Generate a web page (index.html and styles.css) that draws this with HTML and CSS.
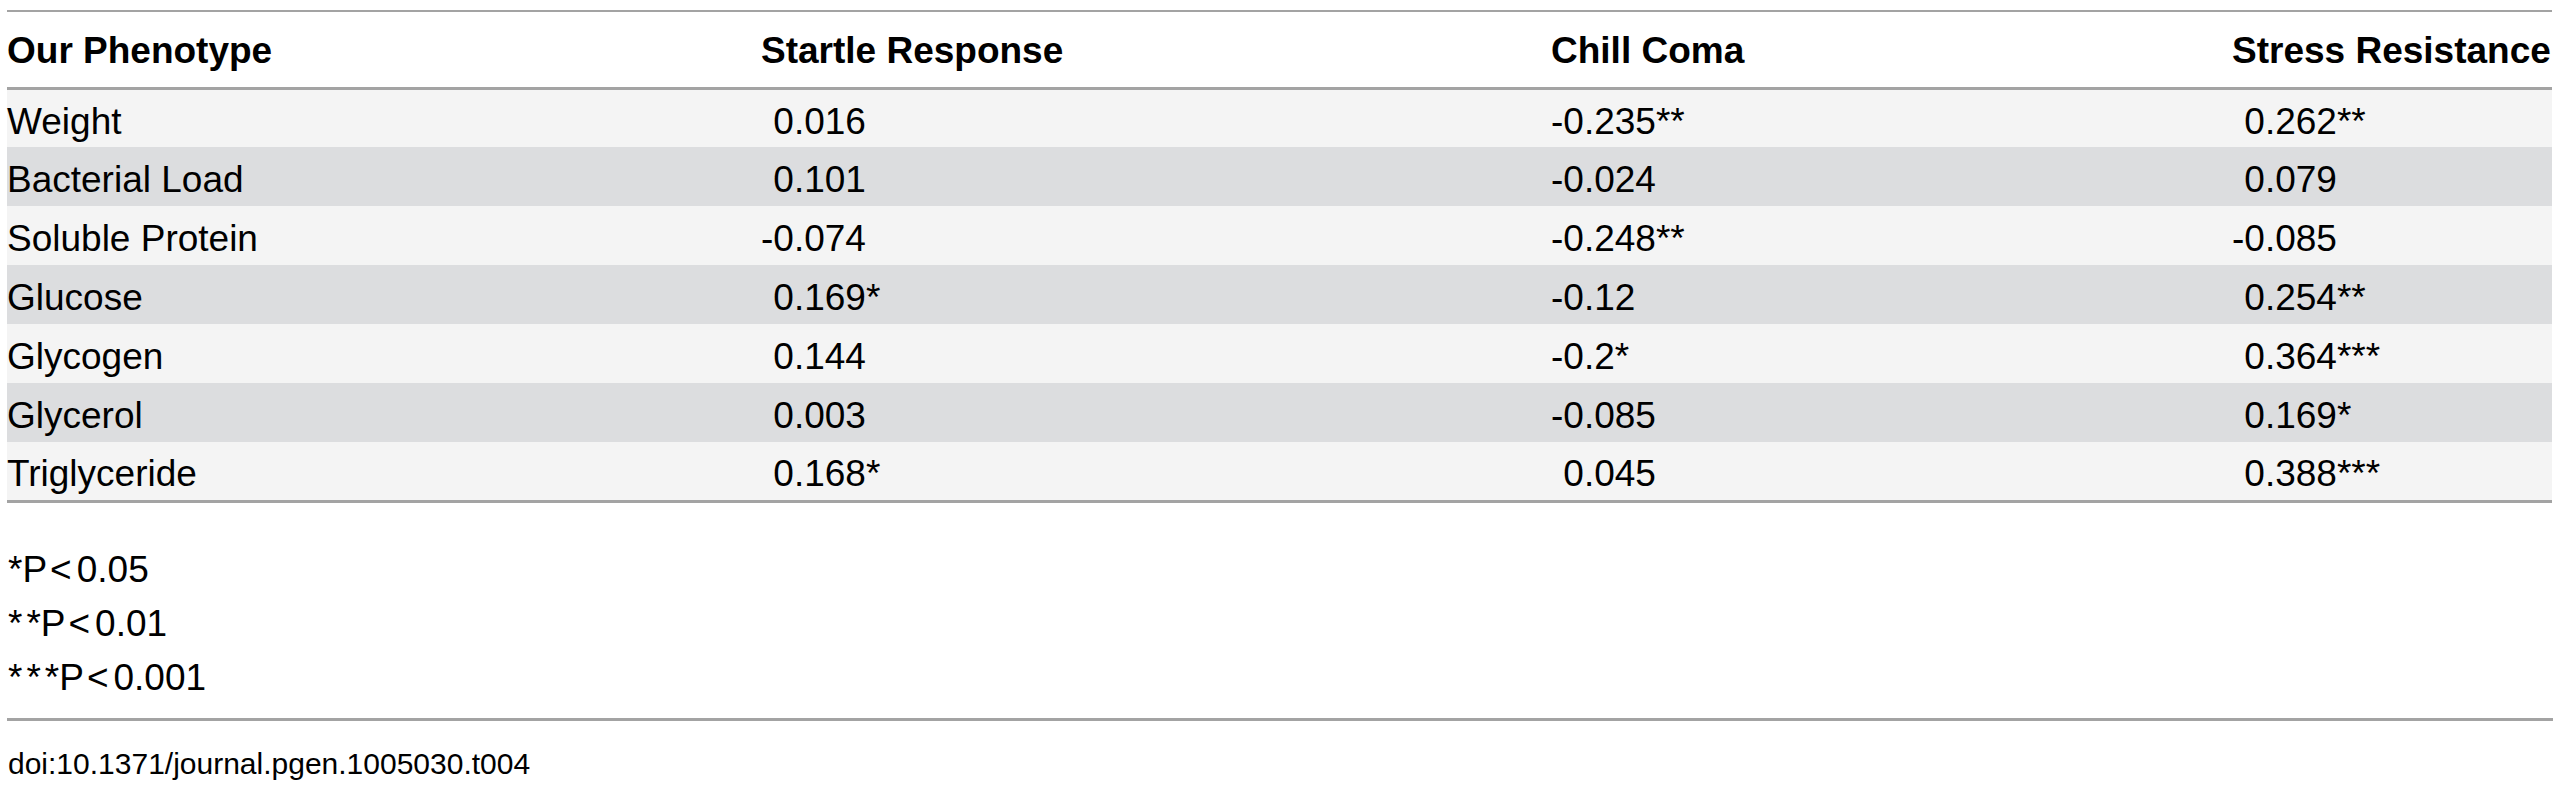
FILE: index.html
```html
<!DOCTYPE html>
<html lang="en">
<head>
<meta charset="utf-8">
<title>Table 4</title>
<link rel="stylesheet" href="styles.css">
</head>
<body>
<div class="wrap">
  <table class="data">
    <colgroup>
      <col class="c1"><col class="c2"><col class="c3"><col class="c4">
    </colgroup>
    <thead>
      <tr>
        <th>Our Phenotype</th>
        <th>Startle Response</th>
        <th>Chill Coma</th>
        <th>Stress Resistance</th>
      </tr>
    </thead>
    <tbody>
      <tr><td>Weight</td><td class="pos">0.016</td><td>-0.235**</td><td class="pos">0.262**</td></tr>
      <tr><td>Bacterial Load</td><td class="pos">0.101</td><td>-0.024</td><td class="pos">0.079</td></tr>
      <tr><td>Soluble Protein</td><td>-0.074</td><td>-0.248**</td><td>-0.085</td></tr>
      <tr><td>Glucose</td><td class="pos">0.169*</td><td>-0.12</td><td class="pos">0.254**</td></tr>
      <tr><td>Glycogen</td><td class="pos">0.144</td><td>-0.2*</td><td class="pos">0.364***</td></tr>
      <tr><td>Glycerol</td><td class="pos">0.003</td><td>-0.085</td><td class="pos">0.169*</td></tr>
      <tr><td>Triglyceride</td><td class="pos">0.168*</td><td class="pos">0.045</td><td class="pos">0.388***</td></tr>
    </tbody>
  </table>
  <div class="notes">
    <p><span class="ast">*</span>P<span class="lt">&lt;</span>0.05</p>
    <p><span class="ast">**</span>P<span class="lt">&lt;</span>0.01</p>
    <p><span class="ast">***</span>P<span class="lt">&lt;</span>0.001</p>
  </div>
  <div class="doi">doi:10.1371/journal.pgen.1005030.t004</div>
</div>
</body>
</html>
```

FILE: styles.css
```css
html, body {
  margin: 0;
  padding: 0;
  background: #ffffff;
}

body {
  font-family: "Liberation Sans", Arial, Helvetica, sans-serif;
  color: #000;
}

.wrap {
  padding: 10px 14px 0 7px;
}

.data {
  width: 2545px;
  table-layout: fixed;
  border-collapse: collapse;
  border-top: 2px solid #a3a3a3;
  border-bottom: 3px solid #a3a3a3;
  font-size: 37px;
}

.c1 { width: 754px; }
.c2 { width: 790px; }
.c3 { width: 681px; }
.c4 { width: 320px; }

.data th,
.data td {
  padding: 0;
  text-align: left;
  vertical-align: middle;
  white-space: nowrap;
}

.data thead tr {
  height: 77px;
  background: #ffffff;
}

.data thead th {
  font-weight: bold;
  padding-top: 3px;
  border-bottom: 3px solid #a3a3a3;
}

.data tbody tr {
  height: 59px;
}

.data tbody td {
  padding-top: 7px;
}

.data tbody tr:nth-child(odd) {
  background: #f4f4f4;
}

.data tbody tr:nth-child(even) {
  background: #dcdddf;
}

.data td.pos {
  padding-left: 0.333em;
}

.notes {
  margin-top: 40px;
  font-size: 37px;
  padding-left: 1px;
}

.notes p {
  margin: 0;
  line-height: 54px;
}

.notes .ast {
  letter-spacing: 4px;
  margin-right: -4px;
}

.notes .lt {
  margin: 0 5px 0 3px;
}

.doi {
  margin-top: 13px;
  border-top: 3px solid #a3a3a3;
  width: 2545px;
  padding-top: 23px;
  font-size: 30px;
  line-height: 40px;
  padding-left: 1px;
}
```
